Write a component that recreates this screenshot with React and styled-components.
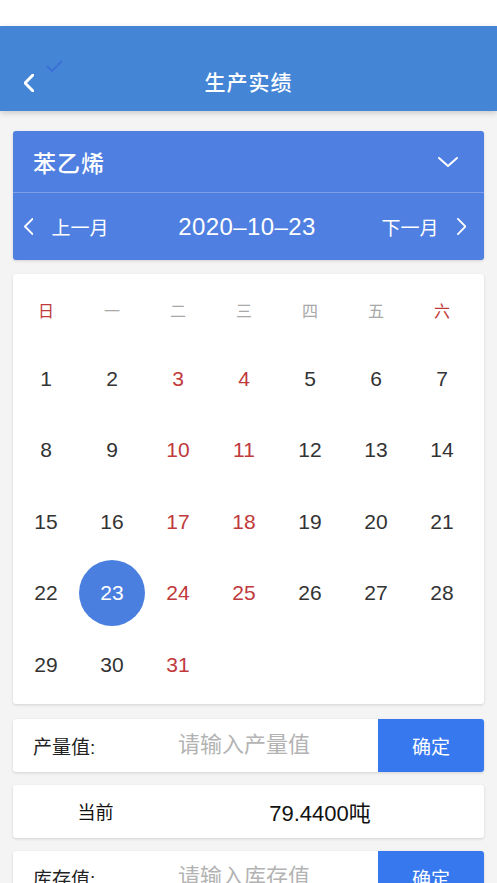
import React from 'react';
import styled, {createGlobalStyle, css} from 'styled-components';

const font = `"Liberation Sans", "Noto Sans CJK SC", sans-serif`;

const GlobalStyle = createGlobalStyle`
  body {
    margin: 0;
    background: #f4f4f4;
    font-family: ${font};
  }
  * { box-sizing: border-box; }
`;

const Page = styled.div`
  min-height: 883px;
  background: #f4f4f4;
`;

const StatusBar = styled.div`
  height: 26px;
  background: #fff;
`;

const Header = styled.header`
  position: relative;
  height: 85px;
  background: #4585d6;
  display: flex;
  align-items: flex-end;
  padding-bottom: 16px;
  box-shadow: 0 2px 6px rgba(0, 0, 0, 0.18);
`;

const BackButton = styled.div`
  width: 60px;
  height: 24px;
  display: flex;
  align-items: center;
  padding-left: 24px;
`;

const HeaderMark = styled.svg`
  position: absolute;
  left: 46px;
  top: 34px;
`;

const Title = styled.h1`
  flex: 1;
  margin: 0 60px 0 0;
  text-align: center;
  color: #fff;
  font-size: 21px;
  font-weight: 500;
  line-height: 24px;
  letter-spacing: 1px;
`;

const Content = styled.main`
  padding: 20px 13px 0;
`;

const card = css`
  border-radius: 3px;
  box-shadow: 0 1px 3px rgba(0, 0, 0, 0.14);
`;

const PickerCard = styled.section`
  ${card};
  background: #4f7fe0;
  color: #fff;
`;

const ProductRow = styled.div`
  height: 62px;
  display: flex;
  align-items: center;
  justify-content: space-between;
  padding: 0 26px 0 20px;
  border-bottom: 1px solid #7d9ee9;
`;

const ProductName = styled.span`
  font-size: 23px;
  font-weight: 500;
  letter-spacing: 1px;
`;

const MonthRow = styled.div`
  height: 67px;
  display: flex;
  align-items: center;
  justify-content: space-between;
  padding: 0 18px 0 11px;
`;

const MonthLink = styled.span`
  display: flex;
  align-items: center;
  gap: 18px;
  font-size: 19px;
`;

const DateText = styled.span`
  font-size: 24px;
  letter-spacing: 0.4px;
  margin-left: 4px;
`;

const Calendar = styled.section`
  ${card};
  margin-top: 14px;
  background: #fff;
  padding: 3px 0 3px;
`;

const Grid = styled.div`
  display: grid;
  grid-template-columns: repeat(7, 66px);
`;

const WeekDay = styled.div`
  height: 66px;
  display: flex;
  align-items: center;
  justify-content: center;
  font-size: 16px;
  color: ${({$red}) => ($red ? '#c0393b' : '#a8a8a8')};
`;

const Day = styled.div`
  height: 71.5px;
  display: flex;
  align-items: center;
  justify-content: center;
`;

const DayNum = styled.span`
  width: 66px;
  height: 66px;
  border-radius: 50%;
  display: flex;
  align-items: center;
  justify-content: center;
  font-size: 21px;
  color: ${({$red}) => ($red ? '#c0393b' : '#333')};
  ${({$active}) =>
    $active &&
    css`
      background: #4a7fe0;
      color: #fff;
    `}
`;

const InputRow = styled.div`
  ${card};
  margin-top: ${({$gap}) => $gap || 13}px;
  height: 53px;
  background: #fff;
  display: flex;
  align-items: center;
`;

const Label = styled.span`
  width: 160px;
  padding-left: 20px;
  font-size: 19px;
  color: #222;
`;

const Field = styled.input`
  flex: 1;
  min-width: 0;
  height: 100%;
  border: none;
  outline: none;
  background: transparent;
  padding: 0 0 0 5px;
  font-family: ${font};
  font-size: 22px;
  color: #222;
  &::placeholder {
    color: #b3b3b3;
  }
`;

const Confirm = styled.button`
  width: 106px;
  height: 100%;
  border: none;
  border-radius: 0 3px 3px 0;
  background: #3878ef;
  color: #fff;
  font-family: ${font};
  font-size: 19px;
`;

const Cell = styled.span`
  width: ${({$w}) => $w}px;
  text-align: center;
  font-size: ${({$size}) => $size}px;
  color: #111;
`;

const Chevron = ({dir, size = 18, stroke = 2, color = '#fff'}) => {
  const pts = {
    left: '9,1 1,9 9,17',
    right: '1,1 9,9 1,17',
    down: '1,1 10,9 19,1',
  }[dir];
  const w = dir === 'down' ? 20 : 10;
  const h = dir === 'down' ? 10 : 18;
  return (
    <svg width={w * size / 18} height={h * size / 18} viewBox={`0 0 ${w} ${h}`}>
      <polyline points={pts} fill="none" stroke={color} strokeWidth={stroke} strokeLinecap="round" strokeLinejoin="round" />
    </svg>
  );
};

const weekDays = ['日', '一', '二', '三', '四', '五', '六'];
const days = Array.from({length: 31}, (_, i) => i + 1);

export default function App() {
  return (
    <Page>
      <GlobalStyle />
      <StatusBar />
      <Header>
        <BackButton>
          <Chevron dir="left" size={18} stroke={3} />
        </BackButton>
        <HeaderMark width="17" height="13" viewBox="0 0 17 13">
          <polyline points="1,6 6,11 16,1" fill="none" stroke="#3b72d6" strokeWidth="2" />
        </HeaderMark>
        <Title>生产实绩</Title>
      </Header>
      <Content>
        <PickerCard>
          <ProductRow>
            <ProductName>苯乙烯</ProductName>
            <Chevron dir="down" size={18} stroke={2} />
          </ProductRow>
          <MonthRow>
            <MonthLink>
              <Chevron dir="left" size={17} stroke={2} />
              上一月
            </MonthLink>
            <DateText>2020–10–23</DateText>
            <MonthLink>
              下一月
              <Chevron dir="right" size={17} stroke={2} />
            </MonthLink>
          </MonthRow>
        </PickerCard>

        <Calendar>
          <Grid>
            {weekDays.map((d, i) => (
              <WeekDay key={d} $red={i === 0 || i === 6}>{d}</WeekDay>
            ))}
            {days.map((d, i) => {
              const col = i % 7;
              return (
                <Day key={d}>
                  <DayNum $red={col === 2 || col === 3} $active={d === 23}>{d}</DayNum>
                </Day>
              );
            })}
          </Grid>
        </Calendar>

        <InputRow $gap={15}>
          <Label>产量值:</Label>
          <Field placeholder="请输入产量值" />
          <Confirm>确定</Confirm>
        </InputRow>
        <InputRow>
          <Cell $w={165} $size={18}>当前</Cell>
          <Cell $w={284} $size={22}>79.4400吨</Cell>
        </InputRow>
        <InputRow>
          <Label>库存值:</Label>
          <Field placeholder="请输入库存值" />
          <Confirm>确定</Confirm>
        </InputRow>
      </Content>
    </Page>
  );
}
